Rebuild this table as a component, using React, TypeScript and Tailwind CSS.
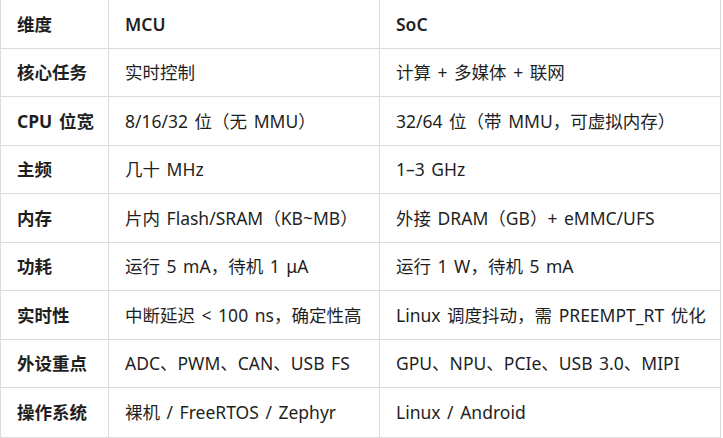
import React from 'react';

const rows: [string, string, string][] = [
  ['核心任务', '实时控制', '计算 + 多媒体 + 联网'],
  ['CPU 位宽', '8/16/32 位（无 MMU）', '32/64 位（带 MMU，可虚拟内存）'],
  ['主频', '几十 MHz', '1–3 GHz'],
  ['内存', '片内 Flash/SRAM（KB~MB）', '外接 DRAM（GB）+ eMMC/UFS'],
  ['功耗', '运行 5 mA，待机 1 μA', '运行 1 W，待机 5 mA'],
  ['实时性', '中断延迟 < 100 ns，确定性高', 'Linux 调度抖动，需 PREEMPT_RT 优化'],
  ['外设重点', 'ADC、PWM、CAN、USB FS', 'GPU、NPU、PCIe、USB 3.0、MIPI'],
  ['操作系统', '裸机 / FreeRTOS / Zephyr', 'Linux / Android'],
];

const App: React.FC = () => {
  return (
    <div className="w-[723px] h-[438px] overflow-hidden bg-white">
      <div
        className="w-[721px] text-[17.5px] text-[#1f1f1f] [word-spacing:2px] border-l border-r border-b border-[#dcdcdc]"
        style={{ fontFamily: '"Noto Sans", "Noto Sans CJK SC", sans-serif' }}
      >
        {/* Header */}
        <div className="grid grid-cols-[108px_271px_1fr] h-[48.5px] border-b border-[#dcdcdc]">
          <div className="flex items-center pl-4 font-bold border-r border-[#dcdcdc]">维度</div>
          <div className="flex items-center pl-4 font-semibold border-r border-[#dcdcdc]">MCU</div>
          <div className="flex items-center pl-4 font-semibold">SoC</div>
        </div>

        {rows.map(([dim, mcu, soc], i) => (
          <div
            key={dim}
            className={`grid grid-cols-[108px_271px_1fr] h-[48.5px] ${i < rows.length - 1 ? 'border-b border-[#dcdcdc]' : ''}`}
          >
            <div className="flex items-center pl-4 font-bold border-r border-[#dcdcdc] whitespace-nowrap">{dim}</div>
            <div className="flex items-center pl-4 border-r border-[#dcdcdc] whitespace-nowrap overflow-hidden">{mcu}</div>
            <div className="flex items-center pl-4 whitespace-nowrap overflow-hidden">{soc}</div>
          </div>
        ))}
      </div>
    </div>
  );
};

export default App;
